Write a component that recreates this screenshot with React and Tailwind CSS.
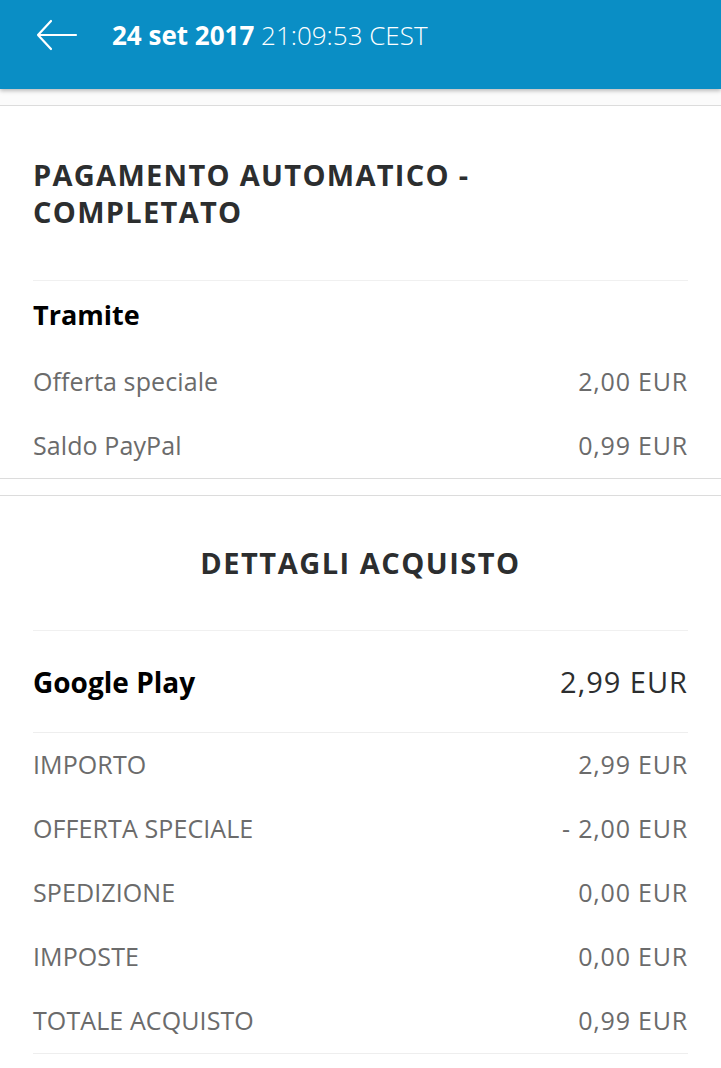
import React from "react";

const font = { fontFamily: '"Open Sans", "Liberation Sans", sans-serif' };

function Row({ label, value }) {
  return (
    <div className="flex h-16 items-center justify-between text-[25px] tracking-[0.1px] text-[#6b6b6b]">
      <span>{label}</span>
      <span className="tracking-[0.8px]">{value}</span>
    </div>
  );
}

export default function App() {
  return (
    <div className="min-h-[1068px] w-[721px] bg-white" style={font}>
      <header className="relative z-10 flex h-[89px] items-start bg-[#0a8ec5] shadow-[0_2px_4px_rgba(0,0,0,0.25)]">
        <div className="flex h-[70px] items-center">
          <svg width="42" height="32" viewBox="0 0 42 32" className="ml-[36px]" fill="none" stroke="white" strokeWidth="2.2" strokeLinecap="round" strokeLinejoin="round">
            <path d="M40 16H2M15 2L2 16l13 14" />
          </svg>
          <div className="ml-[34px] text-[26px] text-white">
            <span className="font-bold">24 set 2017</span>{" "}
            <span className="font-light">21:09:53 CEST</span>
          </div>
        </div>
      </header>
      <div className="h-[16px] bg-[#fbfbfb]" />
      <div className="border-b border-t border-[#dcdcdc] bg-white">
        <section className="px-[33px]">
          <div className="border-b border-[#f0f0f0] pb-[50px] pt-[50px]">
            <h1 className="text-[29px] font-bold leading-[37px] tracking-[1.3px] text-[#2c2e2f]">
              PAGAMENTO AUTOMATICO -<br />COMPLETATO
            </h1>
          </div>
          <div className="flex h-[69px] items-end pb-[15px] text-[27px] font-bold text-black">Tramite</div>
          <Row label="Offerta speciale" value="2,00 EUR" />
          <Row label="Saldo PayPal" value="0,99 EUR" />
        </section>
      </div>
      <div className="h-[16px] bg-white" />
      <div className="border-t border-[#dcdcdc]">
        <section className="px-[33px]">
          <div className="flex h-[135px] items-center justify-center border-b border-[#f0f0f0] text-[29px] font-bold tracking-[1.5px] text-[#2c2e2f]">
            DETTAGLI ACQUISTO
          </div>
          <div className="flex h-[102px] items-center justify-between border-b border-[#eeeeee]">
            <span className="text-[28px] font-bold text-black">Google Play</span>
            <span className="text-[29px] tracking-[1px] text-[#2c2e2f]">2,99 EUR</span>
          </div>
          <div className="border-b border-[#eeeeee]">
            <Row label="IMPORTO" value="2,99 EUR" />
            <Row label="OFFERTA SPECIALE" value="- 2,00 EUR" />
            <Row label="SPEDIZIONE" value="0,00 EUR" />
            <Row label="IMPOSTE" value="0,00 EUR" />
            <Row label="TOTALE ACQUISTO" value="0,99 EUR" />
          </div>
        </section>
      </div>
    </div>
  );
}
